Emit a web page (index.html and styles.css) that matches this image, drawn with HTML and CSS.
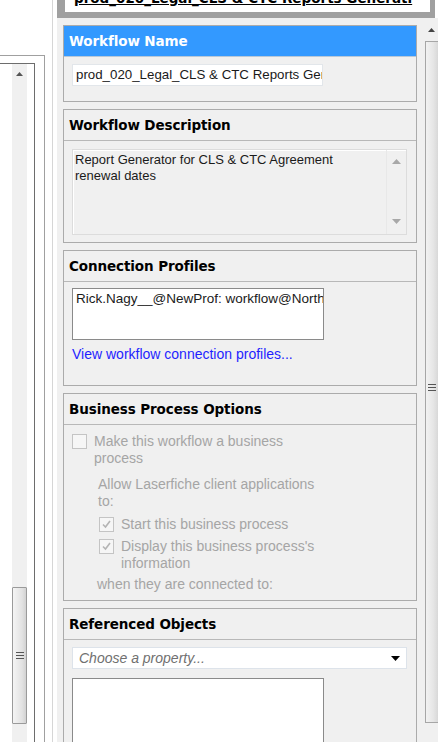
FILE: index.html
```html
<!DOCTYPE html>
<html>
<head>
<meta charset="utf-8">
<link rel="stylesheet" href="styles.css">
</head>
<body>
<div class="app">
  <div class="left">
    <div class="lpane">
      <div class="lbox-outer">
        <div class="lbox-inner">
          <div class="lscroll">
            <div class="sarrow"><svg width="7" height="4" viewBox="0 0 7 4"><path d="M0 4 L3.5 0 L7 4 Z" fill="#555"/></svg></div>
            <div class="ltrack"></div>
            <div class="lthumb"><div class="grip"><i></i><i></i><i></i></div></div>
            <div class="ltrack-end"></div>
          </div>
        </div>
      </div>
    </div>
    <div class="lgap"></div>
  </div>
  <div class="right">
    <div class="titlebar">
      <div class="titlebox"><span class="titletext">prod_020_Legal_CLS &amp; CTC Reports Generati</span></div>
    </div>
    <div class="rbody">
      <div class="main">
        <div class="section">
          <div class="shead active">Workflow Name</div>
          <div class="sbody name-body">
            <div class="textbox">prod_020_Legal_CLS &amp; CTC Reports Generator</div>
          </div>
        </div>
        <div class="section">
          <div class="shead">Workflow Description</div>
          <div class="sbody desc-body">
            <div class="textarea">
              <div class="tatext">Report Generator for CLS &amp; CTC Agreement<br>renewal dates</div>
              <div class="tascroll">
                <svg width="9" height="5" viewBox="0 0 9 5"><path d="M0 5 L4.5 0 L9 5 Z" fill="#a8a8a8"/></svg>
                <svg width="9" height="5" viewBox="0 0 9 5"><path d="M0 0 L4.5 5 L9 0 Z" fill="#a8a8a8"/></svg>
              </div>
            </div>
          </div>
        </div>
        <div class="section">
          <div class="shead">Connection Profiles</div>
          <div class="sbody conn-body">
            <div class="listbox short"><div class="lbtext">Rick.Nagy__@NewProf: workflow@NorthAmerica</div></div>
            <div class="link">View workflow connection profiles...</div>
          </div>
        </div>
        <div class="section">
          <div class="shead">Business Process Options</div>
          <div class="sbody bpo-body">
            <div class="chkrow lvl0">
              <span class="chk"></span>
              <span class="chklabel">Make this workflow a business<br>process</span>
            </div>
            <div class="note">Allow Laserfiche client applications<br>to:</div>
            <div class="chkrow lvl1 first">
              <span class="chk"><svg width="11" height="11" viewBox="0 0 11 11"><path d="M2 5.5 L4.5 8 L9 2" fill="none" stroke="#b4b4b4" stroke-width="1.6"/></svg></span>
              <span class="chklabel">Start this business process</span>
            </div>
            <div class="chkrow lvl1">
              <span class="chk"><svg width="11" height="11" viewBox="0 0 11 11"><path d="M2 5.5 L4.5 8 L9 2" fill="none" stroke="#b4b4b4" stroke-width="1.6"/></svg></span>
              <span class="chklabel">Display this business process's<br>information</span>
            </div>
            <div class="note last">when they are connected to:</div>
          </div>
        </div>
        <div class="section last">
          <div class="shead">Referenced Objects</div>
          <div class="sbody ref-body">
            <div class="dropdown">
              <span class="ddtext">Choose a property...</span>
              <svg width="9" height="5" viewBox="0 0 9 5"><path d="M0 0 L9 0 L4.5 5 Z" fill="#000"/></svg>
            </div>
            <div class="listbox tall"></div>
          </div>
        </div>
      </div>
      <div class="vscroll">
        <div class="sarrow big"><svg width="7" height="4" viewBox="0 0 7 4"><path d="M0 4 L3.5 0 L7 4 Z" fill="#444"/></svg></div>
        <div class="rthumb"><div class="grip"><i></i><i></i><i></i></div></div>
        <div class="rtrack-end"></div>
      </div>
    </div>
  </div>
</div>
</body>
</html>
```
FILE: styles.css
```css
* { box-sizing: border-box; }
html, body { margin: 0; padding: 0; }
body {
  width: 438px;
  height: 742px;
  overflow: hidden;
  background: #ffffff;
  font-family: "Liberation Sans", Arial, sans-serif;
  font-size: 13px;
}
.app {
  display: flex;
  width: 438px;
  height: 742px;
  overflow: hidden;
}

/* left pane */
.left {
  width: 57px;
  height: 742px;
  display: flex;
  flex-shrink: 0;
}
.lpane {
  width: 53px;
  height: 742px;
  border-right: 1px solid #d6d6d6;
  display: flex;
  flex-direction: column;
}
.lgap { width: 4px; }
.lbox-outer {
  margin-top: 55px;
  width: 45px;
  flex: 1;
  border-top: 1px solid #a0a0a0;
  border-right: 1px solid #a0a0a0;
  display: flex;
  flex-direction: column;
}
.lbox-inner {
  margin-top: 7px;
  width: 35px;
  flex: 1;
  border-top: 1px solid #6d6d6d;
  border-right: 1px solid #6d6d6d;
  display: flex;
  padding-left: 12px;
}
.lscroll {
  width: 15px;
  display: flex;
  flex-direction: column;
  background: #f0f0f0;
}
.sarrow {
  height: 20px;
  flex-shrink: 0;
  display: flex;
  align-items: center;
  justify-content: center;
}
.sarrow svg { display: block; }
.ltrack { height: 503px; flex-shrink: 0; }
.lthumb {
  height: 137px;
  flex-shrink: 0;
  border: 1px solid #9a9a9a;
  border-radius: 1px;
  background: linear-gradient(to right, #f4f4f4, #e2e2e2 70%, #d2d2d2);
  display: flex;
  align-items: center;
  justify-content: center;
}
.grip {
  display: flex;
  flex-direction: column;
  gap: 2px;
}
.grip i {
  display: block;
  width: 8px;
  height: 1px;
  background: #555;
}
.ltrack-end { flex: 1; }

/* right pane */
.right {
  width: 381px;
  height: 742px;
  display: flex;
  flex-direction: column;
  flex-shrink: 0;
}
.titlebar {
  height: 18px;
  flex-shrink: 0;
  width: 378px;
  background: #a0a0a0;
  padding-left: 8px;
}
.titlebox {
  width: 365px;
  height: 12px;
  background: #ffffff;
  overflow: hidden;
  padding-left: 9px;
  white-space: nowrap;
}
.titletext {
  display: block;
  font-family: "DejaVu Sans", Verdana, sans-serif;
  font-weight: bold;
  font-size: 13.5px;
  line-height: 14px;
  margin-top: -9px;
  text-decoration: underline;
  color: #000;
}
.rbody {
  flex: 1;
  min-height: 0;
  display: flex;
  overflow: hidden;
}
.main {
  width: 368px;
  background: #f0f0f0;
  padding: 7px 8px 0 6px;
  display: flex;
  flex-direction: column;
  gap: 7px;
}
.vscroll {
  width: 13px;
  background: #f0f0f0;
  display: flex;
  flex-direction: column;
}
.sarrow.big { height: 23px; }
.rthumb {
  height: 682px;
  flex-shrink: 0;
  border: 1px solid #a6a6a6;
  border-right: none;
  background: linear-gradient(to right, #f2f2f2, #e6e6e6 60%, #d8d8d8);
  display: flex;
  align-items: center;
  justify-content: center;
  padding-top: 10px;
}
.rtrack-end { flex: 1; }

/* sections */
.section {
  width: 354px;
  border: 1px solid #ababab;
  background: #f0f0f0;
  flex-shrink: 0;
}
.shead {
  height: 31px;
  border-bottom: 1px solid #b8b8b8;
  padding-left: 5px;
  display: flex;
  align-items: center;
  font-family: "DejaVu Sans", Verdana, sans-serif;
  font-weight: bold;
  font-size: 13.5px;
  color: #000;
  letter-spacing: -0.1px;
}
.shead.active {
  background: #3399ff;
  color: #ffffff;
  border-bottom-color: #b8c8d8;
}
.sbody { padding-left: 8px; }
.name-body { height: 44px; padding-top: 7px; }
.textbox {
  width: 251px;
  height: 22px;
  background: #ffffff;
  border: 1px solid #e2e6ea;
  padding-left: 3px;
  line-height: 20px;
  white-space: nowrap;
  overflow: hidden;
  color: #1a1a1a;
  font-size: 13.3px;
}
.desc-body { height: 101px; padding-top: 8px; }
.textarea {
  width: 335px;
  height: 86px;
  border: 1px solid #dcdcdc;
  box-shadow: inset 1px 1px 0 #ffffff;
  display: flex;
}
.tatext {
  flex: 1;
  padding: 2px 0 0 2px;
  line-height: 16px;
  color: #1a1a1a;
}
.tascroll {
  width: 20px;
  border-left: 1px solid #e8e8e8;
  display: flex;
  flex-direction: column;
  justify-content: space-between;
  align-items: center;
  padding: 9px 0 10px;
}
.tascroll svg { display: block; }
.conn-body { height: 103px; padding-top: 6px; }
.listbox {
  width: 252px;
  background: #ffffff;
  border: 1px solid #8a8a8a;
}
.listbox.short { height: 52px; }
.lbtext {
  padding: 1px 0 0 3px;
  line-height: 17px;
  white-space: nowrap;
  overflow: hidden;
  color: #1a1a1a;
  font-size: 13.5px;
}
.link {
  margin-top: 6px;
  line-height: 17px;
  color: #1f1fff;
  font-size: 14px;
}
.bpo-body {
  height: 175px;
  padding-top: 9px;
  color: #a5a5a5;
  font-size: 14px;
}
.chkrow {
  display: flex;
  align-items: flex-start;
}
.chk {
  width: 15px;
  height: 15px;
  border: 1px solid #c4c4c4;
  background: #f6f6f6;
  flex-shrink: 0;
  display: flex;
  align-items: center;
  justify-content: center;
}
.chk svg { display: block; }
.chklabel {
  line-height: 17px;
  margin-top: -1px;
}
.lvl0 .chklabel { margin-left: 7px; }
.lvl1 { margin-left: 27px; }
.lvl1 .chklabel { margin-left: 7px; }
.lvl1.first { margin-top: 7px; }
.lvl1 + .lvl1 { margin-top: 6px; }
.note {
  margin-left: 26px;
  margin-top: 9px;
  line-height: 17px;
}
.note.last { margin-left: 25px; margin-top: 4px; }
.ref-body { padding-top: 7px; height: 200px; }
.dropdown {
  width: 335px;
  height: 22px;
  background: #ffffff;
  border: 1px solid #dde3ea;
  display: flex;
  align-items: center;
  justify-content: space-between;
  padding: 0 6px 0 6px;
}
.ddtext {
  font-style: italic;
  color: #707070;
  font-size: 14px;
}
.dropdown svg { display: block; }
.listbox.tall {
  margin-top: 9px;
  height: 120px;
}
```
